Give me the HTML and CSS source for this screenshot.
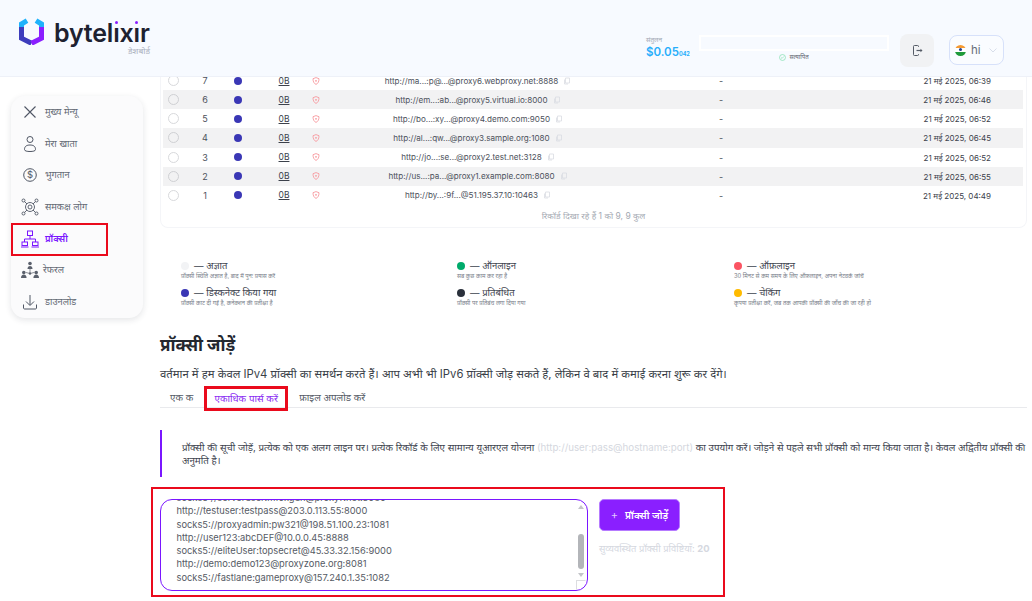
FILE: index.html
```html
<!DOCTYPE html>
<html lang="hi">
<head>
<meta charset="utf-8">
<title>bytelixir</title>
<link rel="stylesheet" href="styles.css">
</head>
<body>
<div class="page">
  <header class="topbar">
    <div class="brand">
      <svg class="logo" viewBox="0 0 25 27" width="25" height="27">
        <path d="M8 2.6 2.5 6v4" fill="none" stroke="#1fb2fb" stroke-width="5"/>
        <path d="M17 2.6 22.5 6v4" fill="none" stroke="#1fb2fb" stroke-width="5"/>
        <path d="M2.5 9v11.3l10 5" fill="none" stroke="#3d3cbc" stroke-width="5"/>
        <path d="M22.5 9v11.3l-10 5" fill="none" stroke="#8a1fff" stroke-width="5"/>
      </svg>
      <div class="brand-text">
        <div class="wordmark">bytel<span class="dotted">ı</span>x<span class="dotted">ı</span>r</div>
        <div class="brand-sub">डेशबोर्ड</div>
      </div>
    </div>
    <div class="balance">
      <div class="balance-label">संतुलन</div>
      <div class="balance-value">$0.05<small>042</small></div>
    </div>
    <div class="status">
      <div class="status-bar"></div>
      <div class="status-note">
        <svg width="7" height="7" viewBox="0 0 8 8"><circle cx="4" cy="4" r="3.4" fill="none" stroke="#7fdfae" stroke-width=".8"/><path d="M2.4 4l1.1 1.1 2-2.2" fill="none" stroke="#7fdfae" stroke-width=".8"/></svg>
        <span>सत्यापित</span>
      </div>
    </div>
    <button class="logout" aria-label="logout">
      <svg width="11" height="11" viewBox="0 0 11 11"><path d="M6.5 2V1.4A.9.9 0 0 0 5.600.5H2.400a.9.9 0 0 0-.9.9v8.200a.9.9 0 0 0 .9.9h3.200a.9.9 0 0 0 .9-.9V9" fill="none" stroke="#555b66" stroke-width="1"/><path d="M4.500 5.500h4.500" stroke="#555b66" stroke-width="1.200"/><path d="M8.500 3.800l2 1.700-2 1.700z" fill="#555b66"/></svg>
    </button>
    <div class="lang">
      <span class="flag"><i class="flag-o"></i><i class="flag-w"></i><i class="flag-g"></i></span>
      <span class="lang-code">hi</span>
      <svg width="8" height="5" viewBox="0 0 8 5"><path d="M.5.500 4 4 7.500.500" fill="none" stroke="#cfd6e4" stroke-width=".8"/></svg>
    </div>
  </header>

  <div class="workspace">
    <aside class="sidebar">
      <a class="nav-item">
        <svg class="nav-icon" viewBox="0 0 20 20"><path d="M4.500 4.500l11 11M15.500 4.500l-11 11" fill="none" stroke="#4f5664" stroke-width="1.100"/></svg>
        <span>मुख्य मेन्यू</span>
      </a>
      <a class="nav-item">
        <svg class="nav-icon" viewBox="0 0 20 20"><circle cx="10" cy="5.500" r="3" fill="none" stroke="#4f5664"/><path d="M4.500 15.500c0-3.500 2.500-4.500 5.500-4.500s5.500 1 5.500 4.500c0 1.500-2.500 2-5.500 2s-5.500-.5-5.500-2z" fill="none" stroke="#4f5664"/></svg>
        <span>मेरा खाता</span>
      </a>
      <a class="nav-item">
        <svg class="nav-icon" viewBox="0 0 20 20"><circle cx="10" cy="10" r="6.300" fill="none" stroke="#4f5664"/><text x="10" y="13.200" class="dollar">$</text></svg>
        <span>भुगतान</span>
      </a>
      <a class="nav-item">
        <svg class="nav-icon" viewBox="0 0 20 20" fill="none" stroke="#4f5664" stroke-width=".9"><circle cx="10" cy="10" r="4.500"/><circle cx="10" cy="10" r="2"/><circle cx="3.500" cy="3.500" r="1.500"/><circle cx="16.500" cy="3.500" r="1.500"/><circle cx="3.500" cy="16.500" r="1.500"/><circle cx="16.500" cy="16.500" r="1.500"/><path d="M4.600 4.600 7 7M15.400 4.600 13 7M4.600 15.400 7 13M15.400 15.400 13 13"/></svg>
        <span>समकक्ष लोग</span>
      </a>
      <a class="nav-item is-active">
        <svg class="nav-icon" viewBox="0 0 20 20" fill="none" stroke="#7a16ff" stroke-width="1"><rect x="7.500" y="2" width="5" height="4.500"/><path d="M10 6.500V10M4.500 13V10h11v3"/><rect x="2" y="13" width="5.500" height="3.500"/><rect x="12.500" y="13" width="5.500" height="3.500"/><path d="M1 18h7.500M11.500 18H19"/></svg>
        <span>प्रॉक्सी</span>
        <i class="mark mark-nav"></i>
      </a>
      <a class="nav-item nav-item-tight">
        <svg class="nav-icon" viewBox="0 0 20 20" fill="#5a606c"><circle cx="10" cy="3.500" r="1.800"/><path d="M7.500 9c0-2 1-3 2.500-3s2.500 1 2.500 3z"/><circle cx="3.800" cy="12.500" r="1.800"/><path d="M1 18c0-2 1.200-3.500 2.800-3.500S6.600 16 6.600 18z"/><circle cx="16.200" cy="12.500" r="1.800"/><path d="M13.400 18c0-2 1.200-3.500 2.800-3.500S19 16 19 18z"/><circle cx="10" cy="13.500" r="1.200"/><path d="M10 9v3.500M10 13.500l-4 -1M10 13.500l4-1" stroke="#5a606c" stroke-width=".7"/></svg>
        <span>रेफरल</span>
      </a>
      <a class="nav-item">
        <svg class="nav-icon" viewBox="0 0 20 20" fill="none" stroke="#4f5664"><path d="M10 3v10M6 9.500l4 4 4-4M3.500 12.500v3.500c0 .5.500 1 1 1h11c.5 0 1-.5 1-1v-3.500"/></svg>
        <span>डाउनलोड</span>
      </a>
    </aside>

    <main class="content">
      <section class="table-card">
        <div class="row"><i class="check"></i><span>7</span><i class="dot"></i><u>0B</u><svg class="shield" viewBox="0 0 8 8"><path d="M4 .6 7 1.700c0 3-1 4.800-3 5.700-2-.9-3-2.700-3-5.700z" fill="none" stroke="#f79a9f" stroke-width=".9"/><circle cx="4" cy="3.800" r=".9" fill="#f79a9f"/></svg><span class="url">http://ma...:p@...@proxy6.webproxy.net:8888<svg class="copy" viewBox="0 0 8 8"><path d="M2.500 1h4v5h-4zM1.500 2.500V7h3.500" fill="none" stroke="#d9dce2" stroke-width=".8"/></svg></span><span>-</span><span class="date">21 मई 2025, 06:39</span></div>
        <div class="row"><i class="check"></i><span>6</span><i class="dot"></i><u>0B</u><svg class="shield" viewBox="0 0 8 8"><path d="M4 .6 7 1.700c0 3-1 4.800-3 5.700-2-.9-3-2.700-3-5.700z" fill="none" stroke="#f79a9f" stroke-width=".9"/><circle cx="4" cy="3.800" r=".9" fill="#f79a9f"/></svg><span class="url">http://em...:ab...@proxy5.virtual.io:8000<svg class="copy" viewBox="0 0 8 8"><path d="M2.500 1h4v5h-4zM1.500 2.500V7h3.500" fill="none" stroke="#d9dce2" stroke-width=".8"/></svg></span><span>-</span><span class="date">21 मई 2025, 06:46</span></div>
        <div class="row"><i class="check"></i><span>5</span><i class="dot"></i><u>0B</u><svg class="shield" viewBox="0 0 8 8"><path d="M4 .6 7 1.700c0 3-1 4.800-3 5.700-2-.9-3-2.700-3-5.700z" fill="none" stroke="#f79a9f" stroke-width=".9"/><circle cx="4" cy="3.800" r=".9" fill="#f79a9f"/></svg><span class="url">http://bo...:xy...@proxy4.demo.com:9050<svg class="copy" viewBox="0 0 8 8"><path d="M2.500 1h4v5h-4zM1.500 2.500V7h3.500" fill="none" stroke="#d9dce2" stroke-width=".8"/></svg></span><span>-</span><span class="date">21 मई 2025, 06:52</span></div>
        <div class="row"><i class="check"></i><span>4</span><i class="dot"></i><u>0B</u><svg class="shield" viewBox="0 0 8 8"><path d="M4 .6 7 1.700c0 3-1 4.800-3 5.700-2-.9-3-2.700-3-5.700z" fill="none" stroke="#f79a9f" stroke-width=".9"/><circle cx="4" cy="3.800" r=".9" fill="#f79a9f"/></svg><span class="url">http://al...:qw...@proxy3.sample.org:1080<svg class="copy" viewBox="0 0 8 8"><path d="M2.500 1h4v5h-4zM1.500 2.500V7h3.500" fill="none" stroke="#d9dce2" stroke-width=".8"/></svg></span><span>-</span><span class="date">21 मई 2025, 06:45</span></div>
        <div class="row"><i class="check"></i><span>3</span><i class="dot"></i><u>0B</u><svg class="shield" viewBox="0 0 8 8"><path d="M4 .6 7 1.700c0 3-1 4.800-3 5.700-2-.9-3-2.700-3-5.700z" fill="none" stroke="#f79a9f" stroke-width=".9"/><circle cx="4" cy="3.800" r=".9" fill="#f79a9f"/></svg><span class="url">http://jo...:se...@proxy2.test.net:3128<svg class="copy" viewBox="0 0 8 8"><path d="M2.500 1h4v5h-4zM1.500 2.500V7h3.500" fill="none" stroke="#d9dce2" stroke-width=".8"/></svg></span><span>-</span><span class="date">21 मई 2025, 06:52</span></div>
        <div class="row"><i class="check"></i><span>2</span><i class="dot"></i><u>0B</u><svg class="shield" viewBox="0 0 8 8"><path d="M4 .6 7 1.700c0 3-1 4.800-3 5.700-2-.9-3-2.700-3-5.700z" fill="none" stroke="#f79a9f" stroke-width=".9"/><circle cx="4" cy="3.800" r=".9" fill="#f79a9f"/></svg><span class="url">http://us...:pa...@proxy1.example.com:8080<svg class="copy" viewBox="0 0 8 8"><path d="M2.500 1h4v5h-4zM1.500 2.500V7h3.500" fill="none" stroke="#d9dce2" stroke-width=".8"/></svg></span><span>-</span><span class="date">21 मई 2025, 06:55</span></div>
        <div class="row"><i class="check"></i><span>1</span><i class="dot"></i><u>0B</u><svg class="shield" viewBox="0 0 8 8"><path d="M4 .6 7 1.700c0 3-1 4.800-3 5.700-2-.9-3-2.700-3-5.700z" fill="none" stroke="#f79a9f" stroke-width=".9"/><circle cx="4" cy="3.800" r=".9" fill="#f79a9f"/></svg><span class="url">http://by...:9f...@51.195.37.10:10463<svg class="copy" viewBox="0 0 8 8"><path d="M2.500 1h4v5h-4zM1.500 2.500V7h3.500" fill="none" stroke="#d9dce2" stroke-width=".8"/></svg></span><span>-</span><span class="date">21 मई 2025, 04:49</span></div>
        <div class="table-foot">रिकॉर्ड दिखा रहे हैं 1 को 9, 9 कुल</div>
      </section>

      <section class="legend">
        <div class="legend-item"><div class="legend-title"><i class="swatch sw-unknown"></i>— अज्ञात</div><p>प्रॉक्सी स्थिति अज्ञात है, बाद में पुनः प्रयास करें</p></div>
        <div class="legend-item"><div class="legend-title"><i class="swatch sw-online"></i>— ऑनलाइन</div><p>सब कुछ काम कर रहा है</p></div>
        <div class="legend-item"><div class="legend-title"><i class="swatch sw-offline"></i>— ऑफ़लाइन</div><p>30 मिनट से कम समय के लिए ऑफ़लाइन, अपना नेटवर्क जांचें</p></div>
        <div class="legend-item"><div class="legend-title"><i class="swatch sw-disc"></i>— डिस्कनेक्ट किया गया</div><p>प्रॉक्सी काट दी गई है, कनेक्शन की प्रतीक्षा है</p></div>
        <div class="legend-item"><div class="legend-title"><i class="swatch sw-banned"></i>— प्रतिबंधित</div><p>प्रॉक्सी पर प्रतिबंध लगा दिया गया</p></div>
        <div class="legend-item"><div class="legend-title"><i class="swatch sw-check"></i>— चेकिंग</div><p>कृपया प्रतीक्षा करें, जब तक आपकी प्रॉक्सी की जाँच की जा रही हो</p></div>
      </section>

      <h2 class="add-title">प्रॉक्सी जोड़ें</h2>
      <p class="add-lead">वर्तमान में हम केवल IPv4 प्रॉक्सी का समर्थन करते हैं। आप अभी भी IPv6 प्रॉक्सी जोड़ सकते हैं, लेकिन वे बाद में कमाई करना शुरू कर देंगे।</p>

      <nav class="tabs">
        <a class="tab">एक क</a>
        <a class="tab tab-active">एकाधिक पार्स करें</a>
        <a class="tab tab-file">फ़ाइल अपलोड करें</a>
      </nav>

      <blockquote class="note">प्रॉक्सी की सूची जोड़ें, प्रत्येक को एक अलग लाइन पर। प्रत्येक रिकॉर्ड के लिए सामान्य यूआरएल योजना <span class="note-muted">(http://user:pass@hostname:port)</span> का उपयोग करें। जोड़ने से पहले सभी प्रॉक्सी को मान्य किया जाता है। केवल अद्वितीय प्रॉक्सी की अनुमति है।</blockquote>

      <section class="bulk">
        <div class="entry">
          <div class="entry-lines">
            <div>socks5://serveruser:mfoxgun@proxy7.net:3080</div>
            <div>http://testuser:testpass@203.0.113.55:8000</div>
            <div>socks5://proxyadmin:pw321@198.51.100.23:1081</div>
            <div>http://user123:abcDEF@10.0.0.45:8888</div>
            <div>socks5://eliteUser:topsecret@45.33.32.156:9000</div>
            <div>http://demo:demo123@proxyzone.org:8081</div>
            <div>socks5://fastlane:gameproxy@157.240.1.35:1082</div>
          </div>
          <div class="scroll"><i class="arrow-up"></i><i class="thumb"></i><i class="arrow-down"></i></div>
          <i class="grip"></i>
        </div>
        <div class="actions">
          <button class="add-btn"><span class="plus">+</span>प्रॉक्सी जोड़ें</button>
          <div class="count">सुव्यवस्थित प्रॉक्सी प्रविष्टियाँ: <b>20</b></div>
        </div>
      </section>
    </main>
  </div>
</div>
</body>
</html>
```
FILE: styles.css
```css
* { box-sizing: border-box; }
html, body { margin: 0; height: 601px; overflow: hidden; background: #fff; }
body { font-family: Inter, "Noto Sans", "Noto Sans Devanagari", sans-serif; color: #2b3038; }
p, h2, blockquote { margin: 0; }

.page { height: 601px; display: flex; flex-direction: column; overflow: hidden; }

.topbar { position: relative; z-index: 2; flex: none; height: 77px; background: #f7faff; border-bottom: 1px solid #eef1f8; display: flex; align-items: flex-start; padding-left: 19px; }
.brand { display: flex; gap: 10px; padding-top: 18px; width: 627px; }
.logo { flex: none; }
.brand-text { display: flex; flex-direction: column; width: 96px; padding-top: 1.5px; }
.wordmark { font-size: 25px; line-height: 27px; font-weight: 600; color: #1d2130; letter-spacing: -.2px; white-space: nowrap; }
.dotted { position: relative; }
.dotted::after { content: ""; position: absolute; left: 50%; top: 3px; width: 3px; height: 3px; margin-left: -1.5px; border-radius: 50%; background: #8a1fff; }
.brand-sub { font-size: 8.5px; line-height: 8px; color: #aab0bd; text-align: right; }

.balance { width: 53px; padding-top: 36px; }
.balance-label { font-size: 6.5px; line-height: 9px; color: #a3a9b5; }
.balance-value { font-size: 11.5px; line-height: 15px; font-weight: 600; color: #27aefb; white-space: nowrap; }
.balance-value small { font-size: 5.5px; font-weight: 700; }

.status { width: 190px; padding-top: 35px; margin-right: 11px; }
.status-bar { height: 16px; border: 2px solid #fff; background: #f7faff; }
.status-note { display: flex; justify-content: center; align-items: center; gap: 3px; font-size: 6px; line-height: 10px; color: #5d6470; margin-top: 1px; }

.logout { width: 34px; height: 33px; margin-top: 34px; margin-right: 15px; border: 0; border-radius: 8px; background: #f1f2f4; display: flex; align-items: center; justify-content: center; padding: 0; }
.lang { width: 55px; height: 30px; margin-top: 35px; border: 1px solid #d7e1fa; border-radius: 8px; background: #fafcff; display: flex; align-items: center; padding-left: 5px; gap: 5px; }
.flag { width: 11px; height: 11px; border-radius: 50%; overflow: hidden; display: flex; flex-direction: column; flex: none; }
.flag i { flex: 1; display: block; }
.flag-o { background: #f59a33; }
.flag-w { background: #fff; position: relative; }
.flag-w::after { content: ""; position: absolute; left: 4px; top: 0; width: 3px; height: 3px; border-radius: 50%; background: #23408f; }
.flag-g { background: #1f9a3a; }
.lang-code { font-size: 11.5px; line-height: 14px; color: #666c78; width: 13px; }

.workspace { flex: 1; display: flex; min-height: 0; }

.sidebar { flex: none; width: 132px; height: 222px; margin: 19px 0 0 11px; padding: 0; border-radius: 14px; background: #fbfbfc; box-shadow: 0 2px 6px rgba(30, 40, 60, .12); display: flex; flex-direction: column; }
.nav-item { position: relative; height: 31.7px; flex: none; display: flex; align-items: center; gap: 5px; padding-left: 9px; font-size: 9.3px; line-height: 12px; color: #636974; white-space: nowrap; }
.nav-icon { width: 20px; height: 20px; flex: none; }
.nav-item-tight { gap: 3px; }
.dollar { font-size: 9.5px; text-anchor: middle; fill: #4f5664; font-family: Inter, sans-serif; }
.is-active { color: #7a16ff; font-weight: 600; }
.mark { position: absolute; display: block; border: 2px solid #ea0a1c; }
.mark-nav { left: 0; top: 0; width: 97px; height: 33px; }

.content { flex: none; width: 867px; margin-left: 17px; display: flex; flex-direction: column; margin-top: -6px; }

.table-card { flex: none; width: 867px; height: 157px; padding: 0 3px; border: 1px solid #f4f5f8; border-top: 0; border-radius: 0 0 8px 8px; }
.row { display: grid; grid-template-columns: 20px 44px 22px 57px 20px 304px 182px 212px; align-items: center; justify-items: center; height: 19.15px; font-size: 9px; color: #4c515b; margin-left: -1px; }
.row:nth-child(even) { background: #f2f2f3; }
.check { width: 11px; height: 11px; border: 1px solid #d8d9dc; border-radius: 50%; background: #fff; }
.row:nth-child(even) .check { background: transparent; border-color: #cfd0d3; }
.dot { width: 8px; height: 8px; border-radius: 50%; background: #3a37b5; }
.row u { padding-left: 13px; color: #3c414b; font-size: 8.5px; }
.shield { width: 8px; height: 8px; }
.url { display: flex; align-items: center; gap: 5px; font-size: 8.1px; white-space: nowrap; }
.copy { width: 8px; height: 8px; flex: none; }
.date { justify-self: end; padding-right: 33px; font-size: 8px; color: #3c414b; white-space: nowrap; }
.table-foot { text-align: center; font-size: 8.5px; line-height: 12px; color: #a4a9b2; margin-top: 5px; }

.legend { flex: none; display: grid; grid-template-columns: 276px 277px 1fr; align-content: start; row-gap: 8px; padding: 32px 0 0 21px; height: 108px; }
.legend-item { height: 19px; }
.legend-title { display: flex; align-items: center; font-size: 9.5px; line-height: 12px; color: #3d434e; white-space: nowrap; }
.swatch { width: 8px; height: 8px; border-radius: 50%; margin-right: 5px; flex: none; }
.sw-unknown { background: #f2f3f5; }
.sw-online { background: #00ab6b; }
.sw-offline { background: #fb5462; }
.sw-disc { background: #3a37b5; }
.sw-banned { background: #2a303b; }
.sw-check { background: #ffbb00; }
.legend-item p { font-size: 5.8px; line-height: 8px; color: #787e89; white-space: nowrap; }

.add-title { font-size: 17px; line-height: 24px; font-weight: 700; color: #23272f; margin-top: -3px; }
.add-lead { font-size: 11.3px; line-height: 17px; color: #3a3f48; margin-top: 9px; white-space: nowrap; }

.tabs { flex: none; display: flex; align-items: flex-start; height: 22px; margin-top: 3px; padding-left: 10px; border-bottom: 1px solid #e9eaed; font-size: 9.8px; color: #545a65; }
.tab { display: flex; align-items: center; height: 22px; padding-top: 1px; white-space: nowrap; }
.tab-active { width: 84px; height: 25px; margin-left: 11px; justify-content: center; padding: 0 0 1px; color: #8a2bf2; border: 3px solid #ea0a1c; position: relative; z-index: 1; }
.tab-file { margin-left: 11px; }

.note { flex: none; margin-top: 22px; height: 47px; border-left: 2px solid #7a16ff; padding: 11px 0 0 20px; font-size: 9.75px; line-height: 13px; color: #3d434e; }
.note-muted { color: #d4d7de; }

.bulk { flex: none; margin: 10px 0 0 -9px; width: 574px; height: 110px; border: 2px solid #ea0a1c; padding: 10px 7px; display: flex; gap: 11px; }
.entry { position: relative; width: 428px; height: 92px; flex: none; border: 1.5px solid #7a16ff; border-radius: 12px; overflow: hidden; background: #fff; }
.entry-lines { margin-top: -9px; padding-left: 15.5px; font-size: 9.3px; line-height: 13.25px; color: #555a64; white-space: nowrap; }
.scroll { position: absolute; top: 2px; right: 1px; bottom: 2px; width: 10px; display: flex; flex-direction: column; align-items: center; }
.arrow-up { width: 0; height: 0; margin-top: 3px; border: 3.5px solid transparent; border-top: 0; border-bottom: 4px solid #c3c5c9; }
.thumb { width: 6px; height: 35px; border-radius: 3px; background: #b3b5b9; margin-top: 25px; }
.arrow-down { width: 0; height: 0; margin-top: 4px; border: 3.5px solid transparent; border-bottom: 0; border-top: 4px solid #c3c5c9; }
.grip { position: absolute; right: 1px; bottom: 0; width: 10px; height: 10px; border: 1px solid #dcdde0; border-right-color: transparent; border-bottom-color: transparent; }

.actions { display: flex; flex-direction: column; align-items: flex-start; }
.add-btn { width: 81px; height: 32px; border: 1px solid #b67bff; border-radius: 5px; background: #8a1fff; color: #fff; font: 600 10px/12px Inter, "Noto Sans", sans-serif; display: flex; align-items: center; justify-content: center; gap: 7px; padding: 0; white-space: nowrap; }
.plus { font-weight: 400; font-size: 11px; color: #e0c8ff; }
.count { margin-top: 11px; font-size: 9.4px; line-height: 14px; color: #d5d8df; white-space: nowrap; }
```
